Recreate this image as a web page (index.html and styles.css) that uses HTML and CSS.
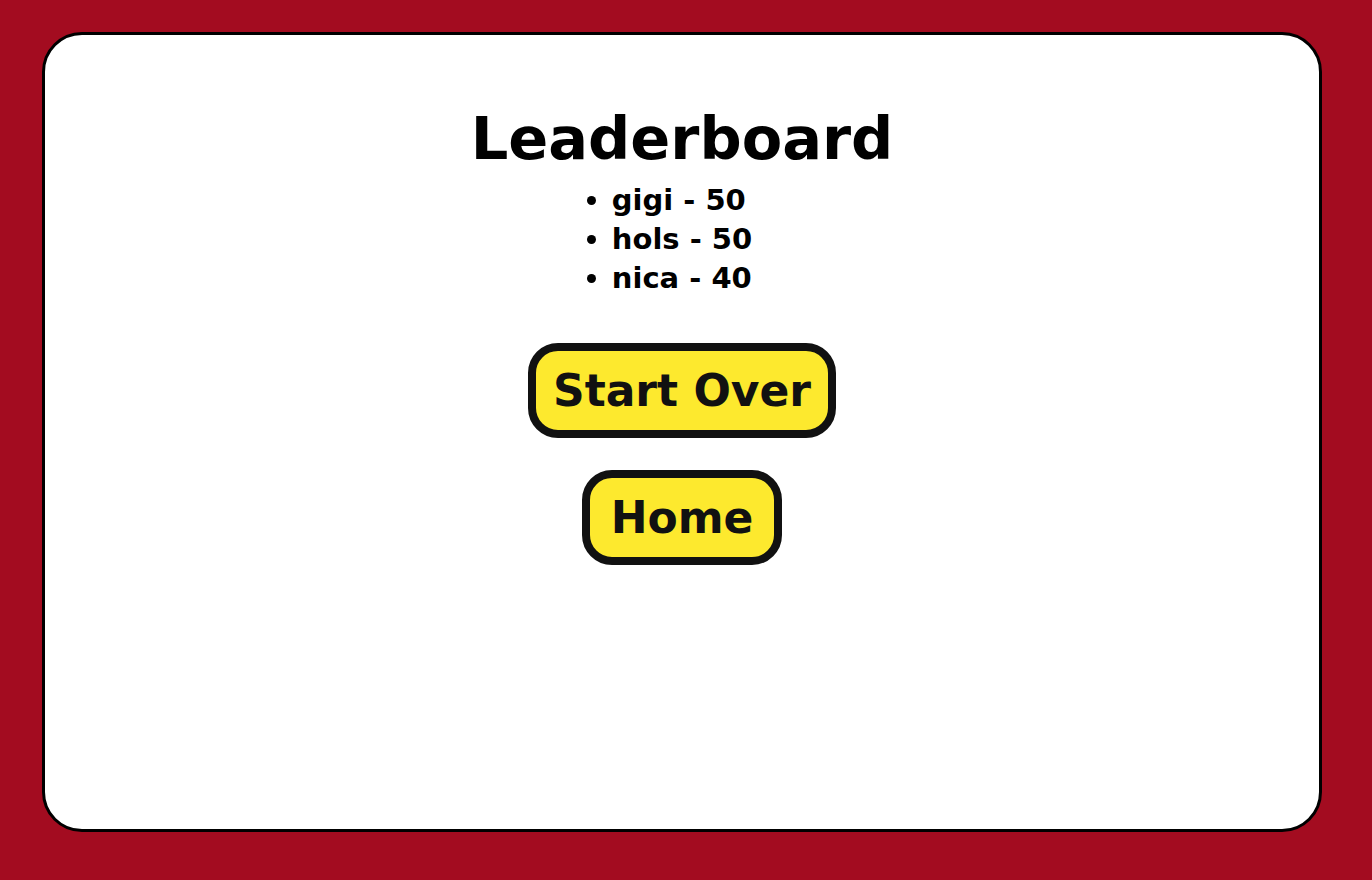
FILE: index.html
```html
<!DOCTYPE html>
<html>
<head>
<meta charset="utf-8">
<link rel="stylesheet" href="styles.css">
</head>
<body>
<main class="card">
  <h1 class="title">Leaderboard</h1>
  <ul class="scores">
    <li>gigi - 50</li>
    <li>hols - 50</li>
    <li>nica - 40</li>
  </ul>
  <div class="actions">
    <button class="btn">Start Over</button>
    <button class="btn btn-home">Home</button>
  </div>
</main>
</body>
</html>
```
FILE: styles.css
```css
html, body {
  margin: 0;
  padding: 0;
  background: #a30c20;
  height: 100%;
}
body {
  padding: 32px 0 0 42px;
  box-sizing: border-box;
  font-family: "DejaVu Sans", "Liberation Sans", sans-serif;
}
.card {
  box-sizing: border-box;
  width: 1280px;
  height: 800px;
  background: #fff;
  border: 3px solid #000;
  border-radius: 40px;
  display: flex;
  flex-direction: column;
  align-items: center;
  padding-top: 66px;
}
.title {
  margin: 0 0 4px;
  font-size: 59px;
  font-weight: 700;
  line-height: 76px;
  color: #000;
}
.scores {
  margin: 0;
  padding: 0;
  font-size: 29px;
  font-weight: 700;
  line-height: 39px;
}
.actions {
  margin-top: 45px;
  display: flex;
  flex-direction: column;
  align-items: center;
  gap: 32px;
}
.btn {
  font-family: inherit;
  font-size: 44px;
  font-weight: 700;
  color: #111;
  background: #fde92e;
  border: 8px solid #111;
  border-radius: 30px;
  height: 95px;
  padding: 0 17px;
  cursor: pointer;
}
.btn-home {
  padding: 0 21px;
}
```
